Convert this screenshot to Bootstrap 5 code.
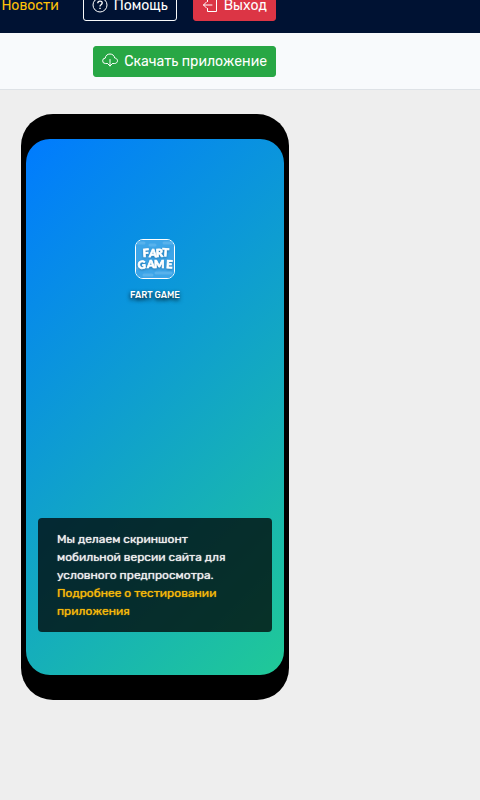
<!DOCTYPE html>
<html lang="ru">
<head>
<meta charset="utf-8">
<meta name="viewport" content="width=device-width, initial-scale=1">
<title>Предпросмотр приложения</title>
<link href="https://cdn.jsdelivr.net/npm/bootstrap@5.3.0/dist/css/bootstrap.min.css" rel="stylesheet">
<style>
body { background: #eee; font-family: Rubik, Roboto, sans-serif; font-size: 14px; }
.site-header { background: #001233; margin-top: -22px; padding: 12px 0; }
.site-column { width: 100%; max-width: 276px; }
.news-link { color: #ffc107; margin-right: 24px; }
.tool-btn { font-size: 14px; line-height: 21px; padding: 4px 8px; border-radius: 3px; display: flex; align-items: center; gap: 6px; white-space: nowrap; }
.tool-btn svg { margin-top: -2px; }
.btn-download { --bs-btn-bg: #28a745; --bs-btn-border-color: #28a745; --bs-btn-color: #fff; --bs-btn-hover-bg: #218838; --bs-btn-hover-color: #fff; }
.sub-bar { background: #f8fafc; padding: 13px 0 12px; border-bottom: 1px solid #dee2e6; }
.phone { width: 100%; max-width: 268px; margin: 24px 0 24px 21px; padding: 25px 5px; background: #000; border-radius: 32px; }
.phone-screen { min-height: 536px; padding: 100px 12px 43px; border-radius: 24px; background: linear-gradient(135deg, #007bff, #20c997); }
.app-icon { width: 40px; height: 40px; border: 1px solid #fff; border-radius: 8px; overflow: hidden; }
.app-name { margin-top: 10px; font-size: 9px; line-height: 12px; text-shadow: 0 2px 4px #000; }
.notice { background: rgba(0, 0, 0, .75); border-radius: 4px; padding: 12px 19px; font-size: 12px; line-height: 18px; color: #ededed; text-shadow: 0 0 1px currentColor; }
.notice a { color: #f5b80a; text-shadow: 0 0 1px currentColor; }
.logo-text { filter: drop-shadow(0 1px 1px #2478b0); font-family: Lato, sans-serif; font-weight: 900; font-size: 11px; }
</style>
</head>
<body>
<header class="site-header">
  <nav class="site-column d-flex align-items-center justify-content-end">
    <a class="news-link text-decoration-none" href="#">Новости</a>
    <button type="button" class="btn btn-outline-light text-white tool-btn me-3">
      <svg width="16" height="16" viewBox="0 0 16 16" fill="none" stroke="currentColor" stroke-width="1" aria-hidden="true"><circle cx="8" cy="8" r="7"/><path d="M5.8 6.2C5.8 3.5 10.2 3.5 10.2 6c0 1.8-2.2 1.7-2.2 3.4" stroke-width="1.3"/><path d="M8 10.7v1.4" stroke-width="1.4"/></svg>
      Помощь
    </button>
    <button type="button" class="btn btn-danger tool-btn">
      <svg width="16" height="16" viewBox="0 0 16 16" fill="none" stroke="currentColor" stroke-linecap="round" stroke-linejoin="round" aria-hidden="true"><path d="M5.5 4.5v-3h9v13h-9v-3M10 8H1.5M4.5 5l-3 3 3 3"/></svg>
      Выход
    </button>
  </nav>
</header>
<div class="sub-bar">
  <div class="site-column d-flex justify-content-end">
    <button type="button" class="btn btn-download tool-btn">
      <svg width="16" height="16" viewBox="0 0 16 16" fill="none" stroke="currentColor" stroke-linecap="round" stroke-linejoin="round" aria-hidden="true"><path d="M5.5 10.500H3.400A2.700 2.700 0 0 1 3.300 5.100C3.500 2.500 5.500 1 8 1s4.300 1.600 4.700 4C14.300 5.200 15.500 6.300 15.500 7.800S14.200 10.500 12.700 10.500h-2.200M8 6.500v6.500M6 11l2 2 2-2"/></svg>
      Скачать приложение
    </button>
  </div>
</div>
<main>
  <div class="phone">
    <div class="phone-screen d-flex flex-column align-items-center">
      <div class="app-icon">
        <svg class="d-block" width="38" height="38" viewBox="0 0 38 38" role="img" aria-label="Fart Game">
          <rect width="38" height="38" fill="#3da5e8"/>
          <path d="M0 3h8M14 5h5M28 3h8M1 28h7M20 33h15M8 35h8" stroke="#58b2ec" stroke-width="3" stroke-linecap="round"/>
          <g class="logo-text" fill="#fff" stroke="#fff" stroke-width=".7">
            <text x="7 13 20 26" y="17 17 17 16" rotate="-4 2 -2 4">FART</text>
            <text x="2 11 18 30" y="29 28 28 28" rotate="-4 0 0 3">GAME</text>
          </g>
        </svg>
      </div>
      <div class="app-name fw-medium text-white">FART GAME</div>
      <div class="notice align-self-stretch mt-auto">Мы делаем скриншонт мобильной версии сайта для условного предпросмотра. <a class="text-decoration-none" href="#">Подробнее о тестировании приложения</a></div>
    </div>
  </div>
</main>
<script src="https://cdn.jsdelivr.net/npm/bootstrap@5.3.0/dist/js/bootstrap.bundle.min.js"></script>
</body>
</html>
